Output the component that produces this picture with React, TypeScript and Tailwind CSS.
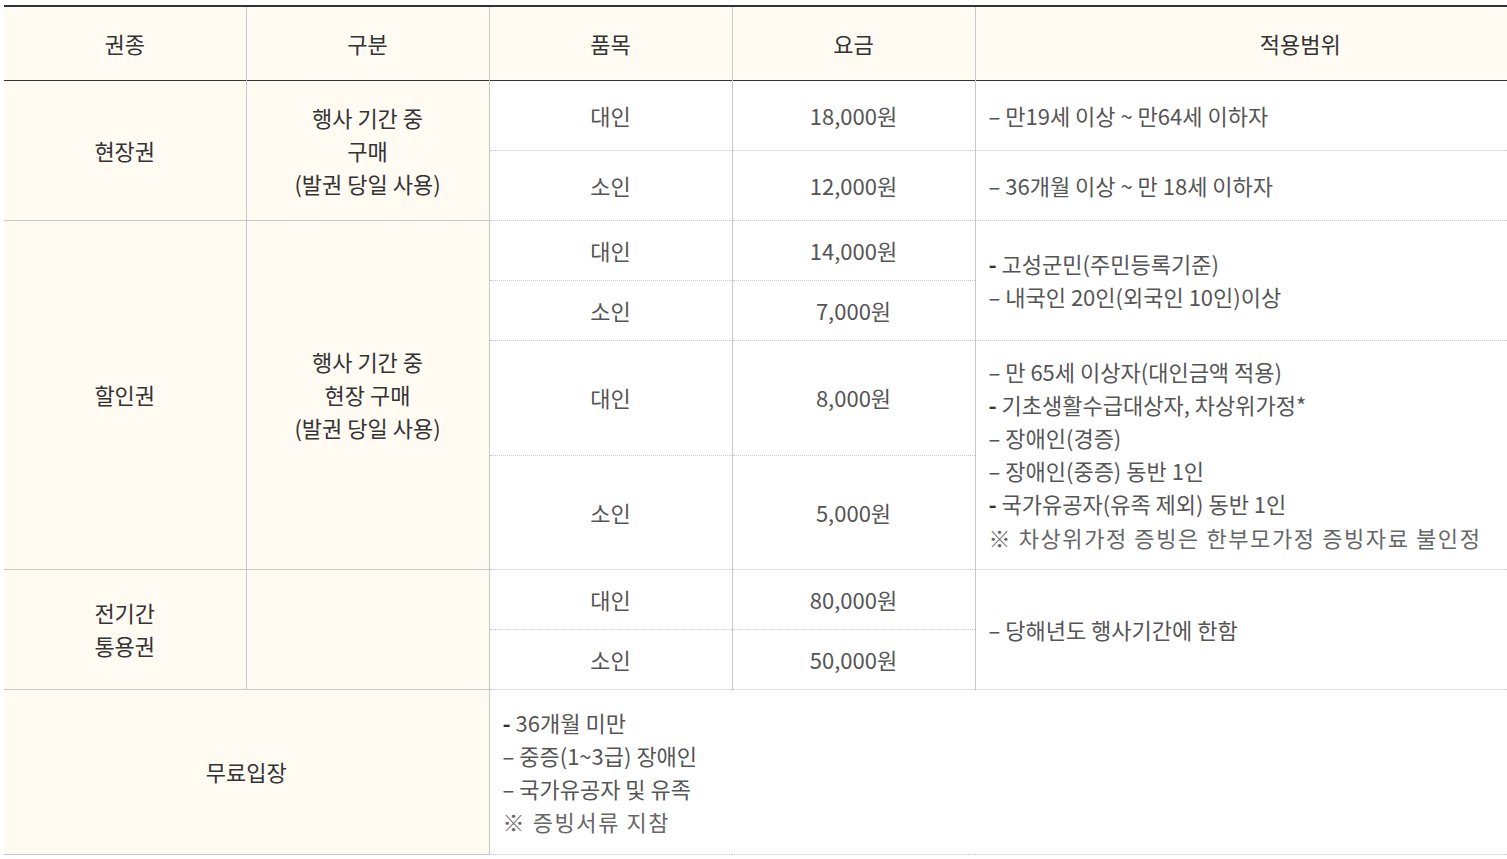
import type { ReactNode } from 'react';

const font = { fontFamily: '"Noto Sans CJK KR", "Noto Sans", sans-serif' };

const th =
  'font-normal text-[22px] text-[#333] text-center align-middle border-l border-[#c8c8c8] first:border-l-0';
const side =
  'bg-[#fffaf2] text-[22px] leading-[33px] text-[#333] text-center align-middle border-l border-b border-solid border-[#c8c8c8] first:border-l-0';
const cell =
  'text-[22px] leading-[33px] text-[#555] text-center align-middle border-l border-solid border-l-[#c8c8c8] border-b border-b-[#c8c8c8] [border-bottom-style:dotted]';
const range =
  'text-[22px] leading-[33px] text-[#555] text-left align-middle pl-[13px] border-l border-solid border-l-[#c8c8c8] border-b border-b-[#c8c8c8] [border-bottom-style:dotted]';

// thin = en dash, bold = heavier hyphen as in the original markup
const Line = ({ children, bold }: { children: ReactNode; bold?: boolean }) => (
  <div>
    {bold ? <span className="font-bold text-[#333]">-</span> : <span>–</span>} {children}
  </div>
);

const Note = ({ children }: { children: ReactNode }) => (
  <div className="tracking-[1.6px] text-[#666]">※ {children}</div>
);

export default function App() {
  return (
    <div className="w-[1507px] h-[859px] overflow-hidden bg-white" style={font}>
      <div className="pt-[5px] pl-[4px]">
        <table className="table-fixed border-collapse w-[1621px] border-t-2 border-[#333]">
          <colgroup>
            <col className="w-[242px]" />
            <col className="w-[243px]" />
            <col className="w-[243px]" />
            <col className="w-[243px]" />
            <col />
          </colgroup>
          <thead>
            <tr className="h-[74px] bg-[#fffaf2] border-b border-[#333]">
              <th className={th}>권종</th>
              <th className={th}>구분</th>
              <th className={th}>품목</th>
              <th className={th}>요금</th>
              <th className={th}>적용범위</th>
            </tr>
          </thead>
          <tbody>
            {/* 현장권 */}
            <tr className="h-[70px]">
              <td rowSpan={2} className={side}>현장권</td>
              <td rowSpan={2} className={side}>
                행사 기간 중
                <br />
                구매
                <br />
                (발권 당일 사용)
              </td>
              <td className={cell}>대인</td>
              <td className={cell}>18,000원</td>
              <td className={range}>
                <Line>만19세 이상 ~ 만64세 이하자</Line>
              </td>
            </tr>
            <tr className="h-[70px]">
              <td className={cell}>소인</td>
              <td className={cell}>12,000원</td>
              <td className={range}>
                <Line>36개월 이상 ~ 만 18세 이하자</Line>
              </td>
            </tr>

            {/* 할인권 */}
            <tr className="h-[60px]">
              <td rowSpan={4} className={side}>할인권</td>
              <td rowSpan={4} className={side}>
                행사 기간 중
                <br />
                현장 구매
                <br />
                (발권 당일 사용)
              </td>
              <td className={cell}>대인</td>
              <td className={cell}>14,000원</td>
              <td rowSpan={2} className={range}>
                <Line bold>고성군민(주민등록기준)</Line>
                <Line>내국인 20인(외국인 10인)이상</Line>
              </td>
            </tr>
            <tr className="h-[60px]">
              <td className={cell}>소인</td>
              <td className={cell}>7,000원</td>
            </tr>
            <tr className="h-[115px]">
              <td className={cell}>대인</td>
              <td className={cell}>8,000원</td>
              <td rowSpan={2} className={`${range} py-[14px]`}>
                <Line>만 65세 이상자(대인금액 적용)</Line>
                <Line bold>기초생활수급대상자, 차상위가정*</Line>
                <Line>장애인(경증)</Line>
                <Line>장애인(중증) 동반 1인</Line>
                <Line bold>국가유공자(유족 제외) 동반 1인</Line>
                <div className="mt-[1px]">
                  <Note>차상위가정 증빙은 한부모가정 증빙자료 불인정</Note>
                </div>
              </td>
            </tr>
            <tr className="h-[114px]">
              <td className={cell}>소인</td>
              <td className={cell}>5,000원</td>
            </tr>

            {/* 전기간 통용권 */}
            <tr className="h-[60px]">
              <td rowSpan={2} className={side}>
                전기간
                <br />
                통용권
              </td>
              <td rowSpan={2} className={side}></td>
              <td className={cell}>대인</td>
              <td className={cell}>80,000원</td>
              <td rowSpan={2} className={range}>
                <Line>당해년도 행사기간에 한함</Line>
              </td>
            </tr>
            <tr className="h-[60px]">
              <td className={cell}>소인</td>
              <td className={cell}>50,000원</td>
            </tr>

            {/* 무료입장 */}
            <tr className="h-[165px]">
              <td colSpan={2} className={side}>무료입장</td>
              <td colSpan={3} className={range}>
                <Line bold>36개월 미만</Line>
                <Line>중증(1~3급) 장애인</Line>
                <Line>국가유공자 및 유족</Line>
                <Note>증빙서류 지참</Note>
              </td>
            </tr>
          </tbody>
        </table>
      </div>
    </div>
  );
}
